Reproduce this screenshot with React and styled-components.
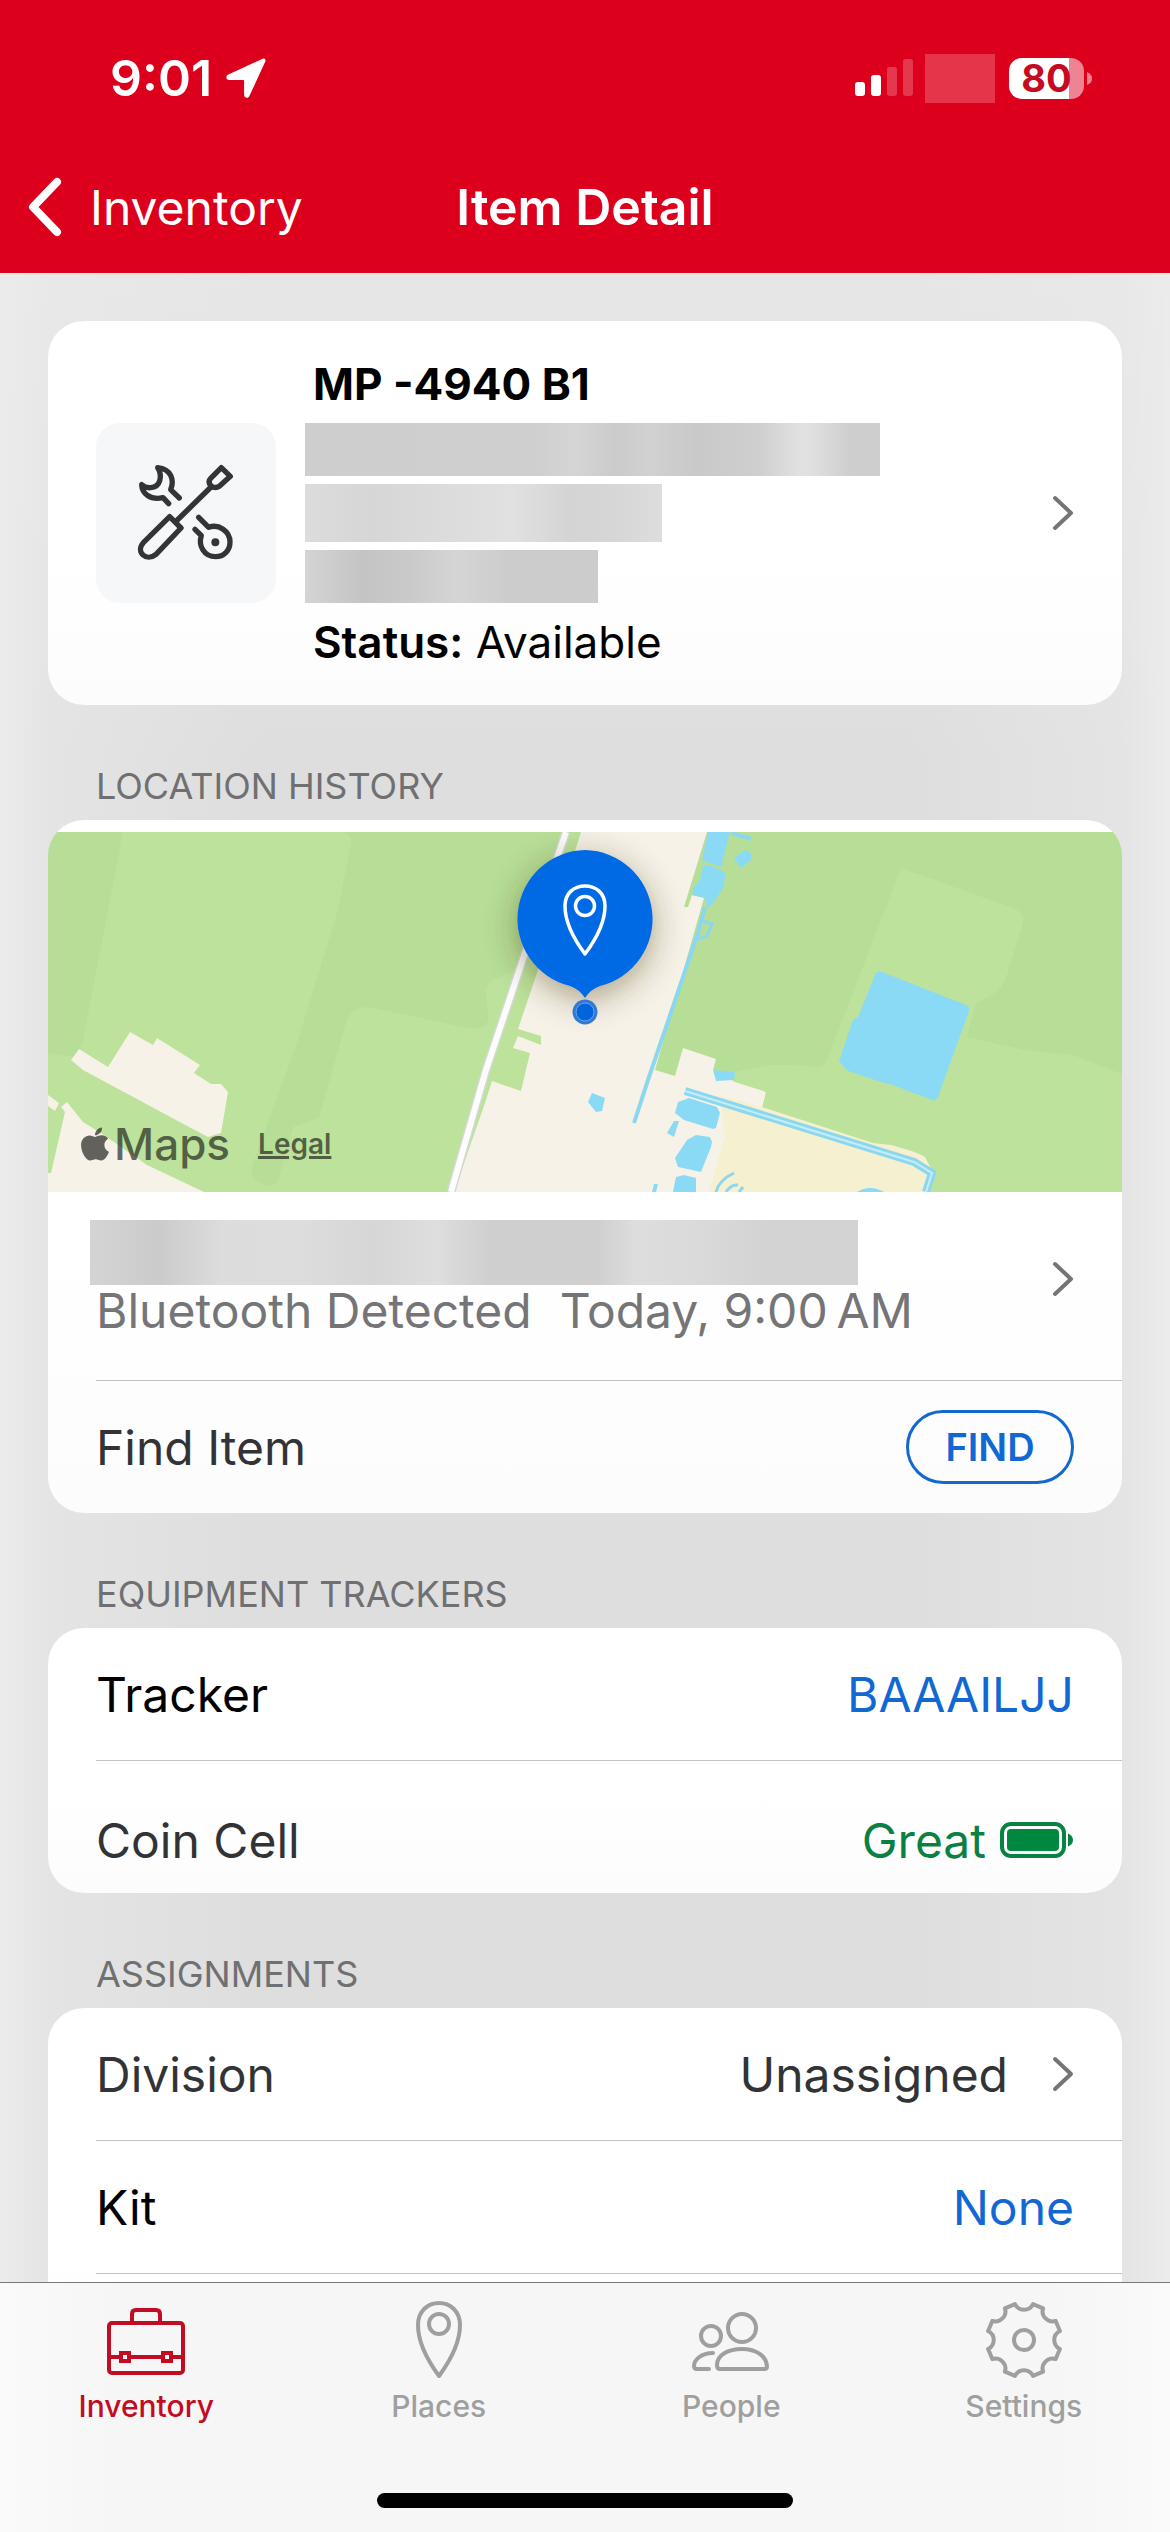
import React from 'react'
import styled, { createGlobalStyle } from 'styled-components'
import { FaApple } from 'react-icons/fa'

const GlobalStyle = createGlobalStyle`
  * {
    box-sizing: border-box;
  }

  body {
    margin: 0;
    font-family: Inter, "Liberation Sans", sans-serif;
    color: #323336;
  }

  h1, h2, p {
    margin: 0;
  }

  button {
    font: inherit;
    color: inherit;
    background: none;
    border: 0;
    padding: 0;
    text-align: left;
    cursor: pointer;
  }

  a {
    color: inherit;
    text-decoration: none;
  }

  svg {
    display: block;
    flex: none;
  }
`

const tabs = [
  { label: 'Inventory', icon: ToolboxIcon, active: true },
  { label: 'Places', icon: PlaceIcon },
  { label: 'People', icon: PeopleIcon },
  { label: 'Settings', icon: GearIcon },
]

const App = () => {
  return (
    <Screen>
      <GlobalStyle />
      <Header>
        <StatusBar>
          <Clock>
            9:01
            <svg width='40' height='40' viewBox='0 0 40 40' fill='#fff'>
              <path d='M36.6 .7 2.4 16.6C-.9 18.2.2 22 3 22h14.4c.5 0 .7.2.7.7V37c0 2.900 3.900 4 5.400.7L39.300 3.500C40.200 1.400 38.600-.2 36.600.700Z' />
            </svg>
          </Clock>
          <StatusRight>
            <svg width='60' height='38' viewBox='0 0 60 38' fill='#fff'>
              <rect x='0' y='23' width='10' height='14' rx='3' />
              <rect x='16' y='16' width='10' height='21' rx='3' />
              <rect x='32' y='8' width='10' height='29' rx='3' opacity='.22' />
              <rect x='48' y='0' width='10' height='37' rx='3' opacity='.22' />
            </svg>
            <HiddenSignal />
            <Battery>
              <BatteryLevel>80</BatteryLevel>
              <svg width='5' height='13' viewBox='0 0 5 13'>
                <path d='M0 0Q5 2 5 6.500T0 13Z' fill='#fff' opacity='.5' />
              </svg>
            </Battery>
          </StatusRight>
        </StatusBar>
        <NavBar>
          <BackButton type='button'>
            <svg width='34' height='60' viewBox='0 0 34 60' fill='none'>
              <path d='M29 5 5 30l24 25' stroke='#fff' strokeWidth='8' strokeLinecap='round' strokeLinejoin='round' />
            </svg>
            Inventory
          </BackButton>
          <Title>Item Detail</Title>
        </NavBar>
      </Header>

      <Content>
        <Card>
          <ItemRow type='button'>
            <IconTile>
              <ToolsIcon />
            </IconTile>
            <ItemInfo>
              <ItemText $bold>MP -4940 B1</ItemText>
              <Redacted $width={575} $height={53} $fill='#cecece, #cfcfcf 40%, #d5d5d5 47%, #cbcbcb 54%, #d1d1d1 60%, #c9c9c9 68%, #cfcfcf 79%, #e1e1e1 86%, #e0e0e0 88%, #cecece 95%' />
              <Redacted $width={357} $height={58} $fill='#dcdcdc, #d6d6d6 18%, #dedede 48%, #e1e1e1 58%, #d4d4d4 74%, #d6d6d6 86%, #dddddd' />
              <Redacted $width={293} $height={53} $fill='#d4d4d4, #c4c4c4 20%, #cacaca 36%, #d5d5d5 52%, #cccccc 70%, #cccccc' />
              <ItemText>
                <b>Status:</b> Available
              </ItemText>
            </ItemInfo>
            <Chevron />
          </ItemRow>
        </Card>

        <SectionTitle>LOCATION HISTORY</SectionTitle>
        <Card $top>
          <MapBox>
            <MapDrawing />
            <MapCredit>
              <MapLogo>
                <FaApple size={38} />
                Maps
              </MapLogo>
              <LegalLink href='#legal'>Legal</LegalLink>
            </MapCredit>
          </MapBox>
          <LocationRow type='button'>
            <LocationInfo>
              <Redacted $width={768} $height={65} $fill='#d4d4d4, #cbcbcb 9%, #dcdcdc 17%, #dddddd 27%, #d6d6d6 37%, #dedede 45%, #cfcfcf 52%, #cfcfcf 66%, #dddddd 71%, #dadada 79%, #d3d3d3 88%, #d3d3d3' />
              <LocationText>
                <span>Bluetooth Detected</span>
                <span>Today, 9:00&#8201;AM</span>
              </LocationText>
            </LocationInfo>
            <Chevron />
          </LocationRow>
          <Row>
            <span>Find Item</span>
            <FindButton type='button'>FIND</FindButton>
          </Row>
        </Card>

        <SectionTitle>EQUIPMENT TRACKERS</SectionTitle>
        <Card>
          <Row $line>
            <Strong>Tracker</Strong>
            <ValueLink href='#tracker'>BAAAILJJ</ValueLink>
          </Row>
          <Row $low>
            <span>Coin Cell</span>
            <CellStatus>
              Great
              <svg width='74' height='36' viewBox='0 0 74 36'>
                <rect x='2' y='2' width='62' height='32' rx='9' fill='none' stroke='#06843f' strokeWidth='4' />
                <rect x='7' y='7' width='52' height='22' rx='4' fill='#008840' />
                <path d='M68 11.500Q73 13.500 73 18T68 24.500Z' fill='#06843f' />
              </svg>
            </CellStatus>
          </Row>
        </Card>

        <SectionTitle>ASSIGNMENTS</SectionTitle>
        <Card>
          <Row as='button' type='button' $line>
            <span>Division</span>
            <Value>
              Unassigned
              <Chevron />
            </Value>
          </Row>
          <Row $line>
            <Strong>Kit</Strong>
            <ValueLink href='#kit'>None</ValueLink>
          </Row>
          <Row />
        </Card>
      </Content>

      <TabBar>
        <Tabs>
          {tabs.map(({ label, icon: Icon, active }) => (
            <Tab key={label} href={'#' + label.toLowerCase()} $active={active}>
              <Icon />
              {label}
            </Tab>
          ))}
        </Tabs>
        <HomeIndicator />
      </TabBar>
    </Screen>
  )
}

function Chevron() {
  return (
    <svg width='22' height='36' viewBox='0 0 22 36' fill='none'>
      <path d='M3 3 19 18 3 33' stroke='#757578' strokeWidth='4' strokeLinecap='round' strokeLinejoin='round' />
    </svg>
  )
}

function ToolsIcon() {
  return (
    <svg width='112' height='112' viewBox='0 6 336 336' fill='none' stroke='#333436' strokeWidth='16' strokeLinecap='round' strokeLinejoin='round'>
      <path d='M148 129 122 104C134 76 124 42 83 38C98 62 92 96 62 98C50 99 42 96 35 89C36 115 60 137 99 128L116 146' />
      <path d='M119 185 40 263C16 290 48 322 78 298L153 219ZM136 201 243 96' />
      <path d='M274 38 301 64 268 94C260 99 250 98 243 92C236 84 236 76 242 70Z' />
      <path d='M206 187 236 217C266 206 300 228 300 261C300 287 281 305 257 305C222 305 204 272 214 242L195 223' />
      <circle cx='256' cy='262' r='12' fill='#333436' stroke='none' />
    </svg>
  )
}

function ToolboxIcon() {
  return (
    <svg width='80' height='80' viewBox='0 0 80 80' fill='none' stroke='currentColor' strokeWidth='4'>
      <rect x='3' y='23' width='74' height='50' rx='3' />
      <path d='M26 22v-8q0-4 4-4h20q4 0 4 4v8M4 57h10M23 57h33M65 57h11' />
      <rect x='15' y='53' width='8' height='8' />
      <rect x='57' y='53' width='8' height='8' />
    </svg>
  )
}

function PlaceIcon() {
  return (
    <svg width='80' height='80' viewBox='0 0 80 80' fill='none' stroke='currentColor' strokeWidth='4' strokeLinejoin='round'>
      <path d='M40 76C29 61 19 42 19 25C19 11 29 3 40 3S61 11 61 25C61 42 51 61 40 76Z' />
      <circle cx='40' cy='24' r='10' />
    </svg>
  )
}

function PeopleIcon() {
  return (
    <svg width='80' height='80' viewBox='0 0 80 80' fill='none' stroke='currentColor' strokeWidth='4' strokeLinecap='round' strokeLinejoin='round'>
      <circle cx='51' cy='28' r='14' />
      <circle cx='20' cy='36' r='10' />
      <path d='M26 65C26 55 37 49 51 49S76 56 76 67Q76 69 73 69H29Q26 69 26 65Z' />
      <path d='M22 53C10 53 3 60 3 66Q3 69 6 69H18' />
    </svg>
  )
}

function GearIcon() {
  // one tooth per eighth of a turn, drawn from notch to notch
  const teeth = []
  for (let i = 0; i < 8; i++) {
    const point = (deg) => {
      const a = ((i * 45 + deg) * Math.PI) / 180
      return (40 + 37 * Math.sin(a)).toFixed(1) + ' ' + (40 - 37 * Math.cos(a)).toFixed(1)
    }
    teeth.push((i ? 'L' : 'M') + point(-14) + 'A10 10 0 0 0 ' + point(14))
  }
  return (
    <svg width='80' height='80' viewBox='0 0 80 80' fill='none' stroke='currentColor' strokeWidth='4' strokeLinejoin='round'>
      <path d={teeth.join('') + 'Z'} />
      <circle cx='40' cy='40' r='10' />
    </svg>
  )
}

function MapDrawing() {
  return (
    <svg width='100%' height='360' viewBox='0 0 1074 360' preserveAspectRatio='xMidYMid slice'>
      <defs>
        <filter id='pinShadow' x='-50%' y='-50%' width='200%' height='200%'>
          <feDropShadow dx='0' dy='8' stdDeviation='16' floodColor='#3c3010' floodOpacity='.42' />
        </filter>
      </defs>
      <rect width='1074' height='360' fill='#bce29b' />
      <g fill='#b6de96'>
        <path d='M0 0H75L35 208 30 225 0 221Z' />
        <path d='M292 0Q305 1 303 12L290 78 249 211 204 335Q202 348 216 353 226 356 230 348L245 295 271 286 298 190Q303 174 321 175L420 196Q440 198 440 186L438 160Q438 151 447 147L480 132 520 0Z' />
        <path d='M600 0H1074V242L1025 223Q980 219 968 216L919 205 928 171 944 163Q955 157 960 140L975 91Q976 80 965 76L853 36 779 228Q776 235 770 235 740 232 721 233L687 240 600 248Z' />
      </g>
      <g fill='#f6f2e7'>
        <path d='M23 228 31 217 60 235 82 200 105 213 109 206 152 233 146 241 163 252H173L180 260 173 301 160 305 128 288 35 238Z' />
        <path d='M0 360V341H3L17 280 13 275 19 270 35 290 56 303 99 333 156 360ZM0 263 11 271 7 279 0 274Z' />
        <path d='M533 0H659L636 75H640L644 63 656 66 607 238 627 244 635 216 668 227 665 238 687 250 718 260 714 276 820 320 690 360H406L438 268 444 249 473 259 482 221 465 216 470 204 493 213V204L470 197 489 141Z' />
      </g>
      <path d='M672 264 714 275 825 311 843 313Q870 320 877 325L884 338 882 360H661L677 305Z' fill='#f5f0cf' />
      <path d='M518 0 480 112 438 238 403 360' fill='none' stroke='#d5d8d4' strokeWidth='9' />
      <path d='M518 0 480 112 438 238 403 360' fill='none' stroke='#fdfdfd' strokeWidth='6' />

      <g fill='#8bdaf5'>
        <path d='M660 0H682L673 35 654 28ZM686 26 697 18 703 21V28L693 36ZM655 34 662 33 678 41 675 56 666 70 659 76 657 66 644 63 646 55 652 48Z' />
        <path d='M828 141Q830 138 834 140L918 173Q922 175 921 179L890 265Q888 269 884 268L842 252 836 251 800 239 791 229 805 188 810 185Z' />
        <path d='M540 270 544 261 557 266 554 279 548 280ZM665 238 687 240 686 248 668 249ZM626 289H631L626 305 619 301Z' />
        <path d='M627 281 630 270 641 266 669 275 672 281 668 296 665 297 636 288ZM627 326 639 308 648 303 662 305 664 310 663 315 653 340 630 335ZM628 345 636 343 648 346V360H625ZM604 360 606 352H610L608 360ZM809 360Q822 352 836 360Z' />
      </g>
      <g fill='none' stroke='#8bd7f0'>
        <path d='M684 1 703 7M657 75 650 101 600 248 586 291' strokeWidth='4' />
        <path d='M655 89 664 92 659 104 650 107M668 360Q671 348 686 341M678 360Q683 352 690 353M691 360 695 355' strokeWidth='3' />
        <path d='M637 259 866 330 884 341 878 360' strokeWidth='8' />
        <path d='M637 259 866 330 884 341 878 360' stroke='#c4edf6' strokeWidth='2' />
      </g>

      <path d='M537 18A69 69 0 0 1 552 154Q543 157 537 166 531 157 522 154A69 69 0 0 1 537 18Z' fill='#006be5' filter='url(#pinShadow)' />
      <path d='M537 122C525 106 517 88 517 74C517 61 526 54 537 54S557 61 557 74C557 88 549 106 537 122Z' fill='none' stroke='#fff' strokeWidth='3.500' strokeLinejoin='round' />
      <circle cx='537' cy='74' r='9.500' fill='none' stroke='#fff' strokeWidth='3.500' />
      <circle cx='537' cy='180' r='12.500' fill='#3179d2' />
      <circle cx='537' cy='180' r='9' fill='#0065dc' stroke='#6aa2e4' strokeWidth='1' />
    </svg>
  )
}

const Screen = styled.div`
  display: flex;
  flex-direction: column;
  height: 100vh;
  overflow: hidden;
  background:
    linear-gradient(to bottom, #ebebeb, rgba(235, 235, 235, 0) 760px),
    linear-gradient(to right, #ececec, #e4e4e4 48px, #dedede 260px, #dedede calc(100% - 260px), #e4e4e4 calc(100% - 48px), #ececec);
`

const Header = styled.header`
  background: #dc001c;
  color: #fff;
  padding-bottom: 15px;
`

const StatusBar = styled.div`
  display: flex;
  align-items: center;
  justify-content: space-between;
  height: 156px;
  padding: 0 78px 0 110px;
`

const Clock = styled.div`
  display: flex;
  align-items: center;
  gap: 14px;
  font-size: 50px;
  font-weight: 600;
`

const StatusRight = styled.div`
  display: flex;
  align-items: center;
  gap: 10px;
`

const HiddenSignal = styled.div`
  width: 70px;
  height: 49px;
  background: #e5354b;
`

const Battery = styled.div`
  display: flex;
  align-items: center;
  gap: 3px;
  margin-left: 4px;
`

const BatteryLevel = styled.div`
  width: 75px;
  border-radius: 13px;
  background: linear-gradient(to right, #fff 80%, #ee8391 80%);
  color: #c60a22;
  font-size: 38px;
  font-weight: 700;
  line-height: 41px;
  text-align: center;
`

const NavBar = styled.div`
  display: grid;
  grid-template-columns: 1fr auto 1fr;
  align-items: center;
  height: 102px;
  padding: 0 28px;
`

const BackButton = styled.button`
  display: flex;
  align-items: center;
  gap: 28px;
  font-size: 48px;
`

const Title = styled.h1`
  font-size: 50px;
  font-weight: 600;
`

const Content = styled.main`
  flex: 1;
  min-height: 0;
  overflow: hidden;
  padding: 48px 48px 0;
`

const Card = styled.section`
  overflow: hidden;
  padding-top: ${(props) => (props.$top ? '12px' : '0')};
  border-radius: 36px;
  background: linear-gradient(to bottom, #fff 60%, #fcfcfc);
`

const ItemRow = styled.button`
  display: flex;
  align-items: center;
  width: 100%;
  padding: 32px 48px;
`

const IconTile = styled.div`
  display: grid;
  place-items: center;
  width: 180px;
  height: 180px;
  border-radius: 24px;
  background: #f5f7f9;
`

const ItemInfo = styled.div`
  display: flex;
  flex: 1;
  flex-direction: column;
  gap: 8px;
  margin-left: 29px;
`

const ItemText = styled.p`
  padding-left: 8px;
  color: #000;
  font-size: 44px;
  font-weight: ${(props) => (props.$bold ? 700 : 400)};
  line-height: 62px;

  b {
    font-weight: 600;
  }
`

const Redacted = styled.div`
  width: ${(props) => props.$width}px;
  height: ${(props) => props.$height}px;
  background: linear-gradient(to right, ${(props) => props.$fill});
`

const SectionTitle = styled.h2`
  padding: 59px 48px 12px;
  color: #707073;
  font-size: 36px;
  font-weight: 400;
  line-height: 44px;
`

const MapBox = styled.div`
  position: relative;
`

const MapCredit = styled.div`
  position: absolute;
  left: 28px;
  bottom: 20px;
  display: flex;
  align-items: center;
  gap: 28px;
  color: rgba(30, 28, 26, 0.68);
`

const MapLogo = styled.div`
  display: flex;
  align-items: center;
  font-size: 44px;
  font-weight: 500;
  line-height: 56px;
`

const LegalLink = styled.a`
  font-size: 28px;
  font-weight: 600;
  text-decoration: underline;
  text-decoration-thickness: 3px;
`

const Row = styled.div`
  display: flex;
  align-items: center;
  justify-content: space-between;
  width: calc(100% - 48px);
  min-height: ${(props) => (props.$line ? '133px' : '132px')};
  margin-left: 48px;
  padding-top: ${(props) => (props.$low ? '26px' : '0')};
  padding-right: 48px;
  border-bottom: ${(props) => (props.$line ? '1px solid #c3c3c6' : '0')};
  font-size: 48px;
`

const LocationRow = styled.button`
  display: flex;
  align-items: center;
  justify-content: space-between;
  width: calc(100% - 48px);
  margin-left: 48px;
  padding: 28px 48px 43px 0;
  border-bottom: 1px solid #c3c3c6;
`

const LocationInfo = styled.div`
  margin-left: -6px;
`

const LocationText = styled.p`
  display: flex;
  gap: 28px;
  padding-left: 6px;
  color: #757578;
  font-size: 48px;
  line-height: 52px;
`

const Strong = styled.span`
  color: #000;
`

const Value = styled.span`
  display: flex;
  align-items: center;
  gap: 44px;
`

const ValueLink = styled.a`
  color: #1268d3;
`

const CellStatus = styled.span`
  display: flex;
  align-items: center;
  gap: 14px;
  color: #0b8043;
`

const FindButton = styled.button`
  width: 168px;
  height: 74px;
  border: 3px solid #1268cf;
  border-radius: 37px;
  color: #1268d3;
  font-size: 38px;
  font-weight: 600;
  text-align: center;
`

const TabBar = styled.footer`
  height: 250px;
  border-top: 1px solid #77787b;
  background: linear-gradient(to right, #fafafa, #f6f6f6 120px, #f6f6f6 calc(100% - 120px), #fafafa);
`

const Tabs = styled.nav`
  display: flex;
  padding-top: 17px;
`

const Tab = styled.a`
  display: flex;
  flex: 1;
  flex-direction: column;
  align-items: center;
  gap: 8px;
  color: ${(props) => (props.$active ? '#c20c24' : '#9f9fa0')};
  font-size: 30px;
  font-weight: 500;
  line-height: 36px;
`

const HomeIndicator = styled.div`
  width: 416px;
  height: 15px;
  margin: 69px auto 0;
  border-radius: 8px;
  background: #000;
`

export default App
